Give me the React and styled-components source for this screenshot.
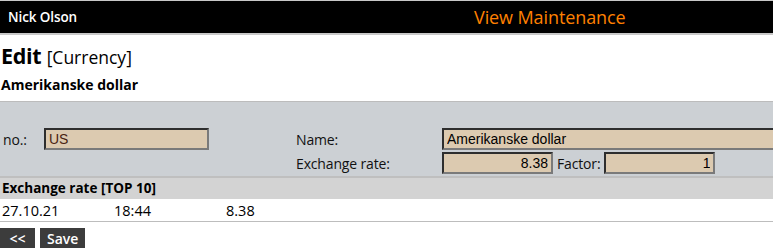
import styled, { createGlobalStyle } from "styled-components";

const Global = createGlobalStyle`
  body {
    margin: 0;
    background: #fff;
    font-family: "Open Sans", "Noto Sans", sans-serif;
    color: #000;
  }
`;

const App = () => {
  return (
    <Page>
      <Global />
      <TopBar>
        <User>Nick Olson</User>
        <AppTitle>View Maintenance</AppTitle>
      </TopBar>

      <Heading>
        <Title>
          Edit <Kind>[Currency]</Kind>
        </Title>
        <SubTitle>Amerikanske dollar</SubTitle>
      </Heading>

      <FormPanel>
        <Label>no.:</Label>
        <Field value="US" width="165px" tone="#4a2412" readOnly />
        <Label>Name:</Label>
        <Field value="Amerikanske dollar" width="340px" readOnly />

        <Empty />
        <Empty />
        <Label>Exchange rate:</Label>
        <RateRow>
          <Field value="8.38" width="111px" align="right" readOnly />
          <Label>Factor:</Label>
          <Field value="1" width="111px" align="right" readOnly />
        </RateRow>
      </FormPanel>

      <SectionHead>Exchange rate [TOP 10]</SectionHead>
      <HistoryRow>
        <Cell>27.10.21</Cell>
        <Cell>18:44</Cell>
        <Cell>8.38</Cell>
      </HistoryRow>

      <Buttons>
        <Button>&lt;&lt;</Button>
        <Button>Save</Button>
      </Buttons>
    </Page>
  );
};

const Page = styled.div`
  width: 773px;
  overflow: hidden;
`;

const TopBar = styled.header`
  display: grid;
  grid-template-columns: 474px 1fr;
  align-items: center;
  height: 32px;
  background: #000;
  border-top: 1px solid #c8c8c8;
  border-bottom: 2px solid #c8c8c8;
`;

const User = styled.div`
  padding-left: 8px;
  color: #fff;
  font-size: 13.5px;
  font-weight: 600;
  letter-spacing: -0.1px;
`;

const AppTitle = styled.div`
  color: #ff8000;
  font-size: 18px;
  letter-spacing: -0.1px;
`;

const Heading = styled.div`
  padding: 7px 0 0 1px;
  height: 59px;
`;

const Title = styled.h1`
  margin: 0;
  font-size: 21.5px;
  font-weight: 700;
  line-height: 28px;
  letter-spacing: -0.3px;
`;

const Kind = styled.span`
  font-size: 17.5px;
  font-weight: 400;
  letter-spacing: 0;
`;

const SubTitle = styled.div`
  font-size: 14px;
  font-weight: 700;
  line-height: 20px;
  margin-top: 4px;
`;

const FormPanel = styled.div`
  display: grid;
  grid-template-columns: 41px 252px 146px 1fr;
  grid-auto-rows: 24px;
  align-items: center;
  padding: 25px 0 1px 3px;
  background: #ccd0d4;
  border-top: 1px solid #bcbcbc;
  border-bottom: 2px solid #bfbfbf;
`;

const Label = styled.span`
  font-size: 14px;
  letter-spacing: -0.15px;
  color: #111;
  white-space: nowrap;
`;

const Empty = styled.span``;

const Field = styled.input`
  box-sizing: border-box;
  width: ${(p) => p.width};
  height: 22px;
  padding: 0 3px;
  background: #dccab0;
  border: 2px solid;
  border-color: #2e2e2e #7a7a7a #7a7a7a #2e2e2e;
  color: ${(p) => p.tone || "#000"};
  font-family: "Liberation Sans", Arial, sans-serif;
  font-size: 14px;
  text-align: ${(p) => p.align || "left"};
  outline: none;
`;

const RateRow = styled.div`
  display: flex;
  align-items: center;
  gap: 4px;
`;

const SectionHead = styled.div`
  height: 21px;
  line-height: 21px;
  padding-left: 2px;
  background: #d3d3d3;
  font-size: 13.5px;
  font-weight: 700;
`;

const HistoryRow = styled.div`
  display: grid;
  grid-template-columns: 112px 112px 112px;
  height: 22px;
  align-items: center;
  padding-left: 2px;
  border-bottom: 1px solid #bdbdbd;
`;

const Cell = styled.span`
  font-size: 14.5px;
`;

const Buttons = styled.div`
  display: flex;
  gap: 5px;
  margin-top: 6px;
`;

const Button = styled.button`
  height: 20px;
  min-width: 35px;
  padding: 0 7px;
  background: #3c3c3c;
  color: #fff;
  border: none;
  font-family: "Open Sans", sans-serif;
  font-size: 14px;
  font-weight: 600;
  line-height: 22px;
`;

export default App;
